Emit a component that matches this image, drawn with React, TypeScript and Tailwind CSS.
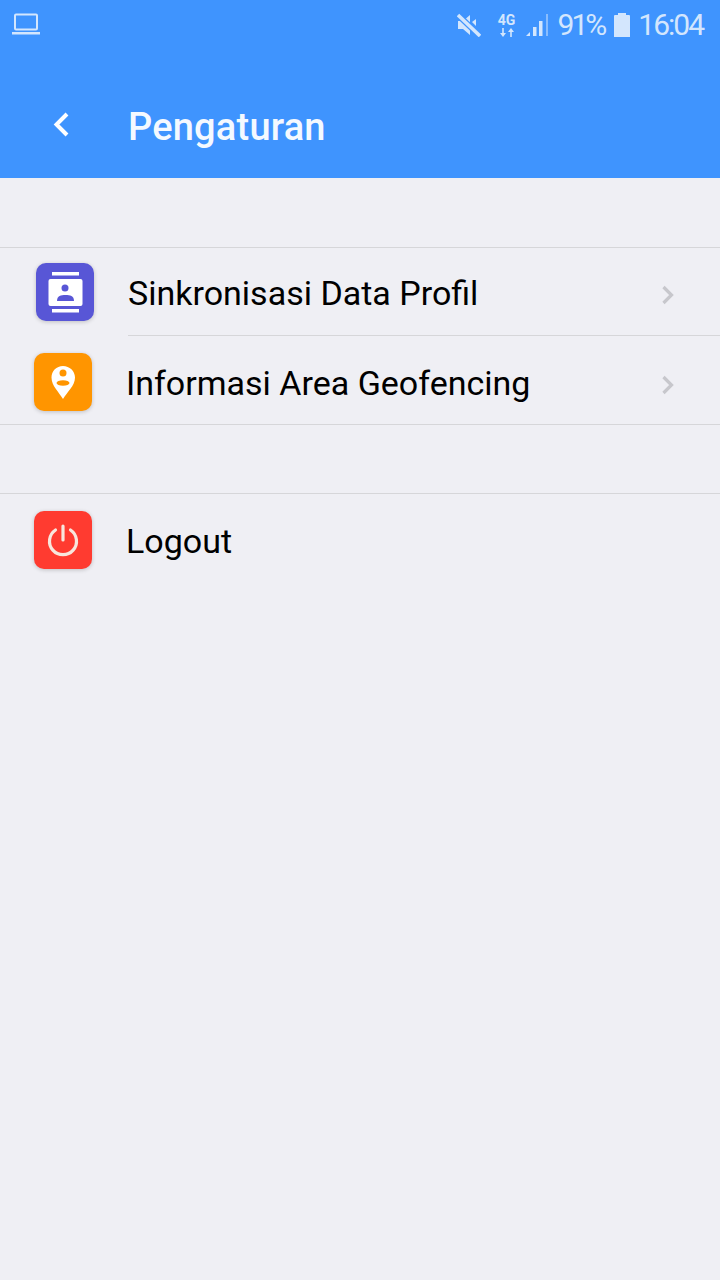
function ChevronRight({ className }: { className: string }) {
  return (
    <svg width="14" height="22" viewBox="0 0 14 22" className={className}>
      <path d="M2.5 3 L10.5 11 L2.5 19" fill="none" stroke="#c7c7cc" strokeWidth="3.2" />
    </svg>
  );
}

function ContactIcon() {
  return (
    <div className="w-[58px] h-[58px] rounded-[10px] bg-[#5856d6] flex items-center justify-center shadow-[0_1px_4px_rgba(0,0,0,0.2)]">
      <svg width="58" height="58" viewBox="0 0 58 58">
        <rect x="16" y="9" width="27" height="3.5" fill="#fff" />
        <rect x="16" y="46" width="27" height="3.5" fill="#fff" />
        <rect x="12.5" y="16" width="34" height="27" rx="2" fill="#fff" />
        <circle cx="29" cy="25" r="3.5" fill="#5856d6" />
        <path d="M21 38 C21 32.5 25 32 29.5 32 C34 32 38 32.5 38 38 Z" fill="#5856d6" />
      </svg>
    </div>
  );
}

function PinIcon() {
  return (
    <div className="w-[58px] h-[58px] rounded-[10px] bg-[#ff9500] flex items-center justify-center shadow-[0_1px_4px_rgba(0,0,0,0.2)]">
      <svg width="58" height="58" viewBox="0 0 58 58">
        <path d="M29 46 C25 39 17.5 33 17.5 24.5 C17.5 18 22.5 13 29 13 C35.5 13 41 18 41 24.5 C41 33 33 39 29 46 Z" fill="#fff" />
        <circle cx="29" cy="20" r="3.5" fill="#ff9500" />
        <ellipse cx="29" cy="30" rx="6.5" ry="2.8" fill="#ff9500" />
      </svg>
    </div>
  );
}

function PowerIcon() {
  return (
    <div className="w-[58px] h-[58px] rounded-[10px] bg-[#ff3b30] flex items-center justify-center shadow-[0_1px_4px_rgba(0,0,0,0.2)]">
      <svg width="58" height="58" viewBox="0 0 58 58">
        <path d="M21.5 19 A13.5 13.5 0 1 0 36.5 19" fill="none" stroke="#f8e6dc" strokeWidth="3.2" strokeLinecap="round" />
        <path d="M29 15 V29" fill="none" stroke="#f8e6dc" strokeWidth="3.2" strokeLinecap="round" />
      </svg>
    </div>
  );
}

export default function App() {
  return (
    <div className="w-[720px] h-[1280px] bg-[#efeff4] flex flex-col font-['Roboto',sans-serif] overflow-hidden">
      {/* Header */}
      <div className="h-[178px] bg-[#3f94fe] flex flex-col shrink-0">
        <div className="h-[50px] pl-3 pr-[17px] flex items-center justify-between text-[#d3e6fd]">
          <svg width="28" height="24" viewBox="0 0 28 24" className="mb-[3px]">
            <rect x="3" y="2.5" width="22" height="15" rx="1" fill="none" stroke="#d3e6fd" strokeWidth="2" />
            <rect x="0" y="20" width="28" height="2.5" fill="#d3e6fd" />
          </svg>
          <div className="flex items-center">
            <svg width="24" height="24" viewBox="0 0 24 24" className="mr-[16px]">
              <path d="M1 8 H6 L13 2 V22 L6 16 H1 Z" fill="#d3e6fd" />
              <path d="M15 9 L19 13 V6 Z" fill="#d3e6fd" />
              <path d="M1 2 L23 23" stroke="#3f94fe" strokeWidth="6" />
              <path d="M1 2 L23 23" stroke="#d3e6fd" strokeWidth="3.5" />
            </svg>
            <div className="w-[20px] mr-[8px] flex flex-col items-center text-[14px] leading-[13px] font-bold">
              <span>4G</span>
              <svg width="16" height="9" viewBox="0 0 16 9" className="mt-px">
                <path d="M3.2 0 V5 H1 L4 9 L7 5 H4.8 V0 Z" fill="#d3e6fd" />
                <path d="M11.2 9 V4 H9 L12 0 L15 4 H12.8 V9 Z" fill="#d3e6fd" />
              </svg>
            </div>
            <svg width="24" height="26" viewBox="0 0 24 26" className="mr-[9px]">
              <path d="M1 24 H5 V20 Z" fill="#d3e6fd" />
              <rect x="8" y="15" width="3.5" height="9" fill="#d3e6fd" />
              <rect x="14" y="9" width="3.5" height="15" fill="#d3e6fd" />
              <rect x="21" y="2" width="2" height="22" fill="#d3e6fd" fillOpacity="0.5" />
            </svg>
            <span className="text-[30px] leading-none tracking-[-3px] mr-[9px]">91%</span>
            <svg width="18" height="26" viewBox="0 0 18 26" className="mr-[7px]">
              <path d="M5 1 H13 V3 H16 Q17 3 17 4 V25 H1 V4 Q1 3 2 3 H5 Z" fill="#d3e6fd" />
            </svg>
            <span className="text-[30px] leading-none tracking-[-2px]">16:04</span>
          </div>
        </div>
        <div className="flex-1 flex items-center pt-[25px]">
          <div className="w-[128px] flex pl-[52px] mb-[4px]">
            <svg width="20" height="28" viewBox="0 0 20 28">
              <path d="M15 3 L4.5 13.5 L15 24" fill="none" stroke="#fff" strokeWidth="4" />
            </svg>
          </div>
          <span className="text-[38px] leading-none tracking-[0.2px] font-medium text-[#f4f9ff]">Pengaturan</span>
        </div>
      </div>

      {/* Sync and geofencing */}
      <div className="mt-[69px] border-y border-[#d6d6d9]">
        <div className="flex items-center h-[87px] pt-px pl-[36px] pr-[45px]">
          <ContactIcon />
          <span className="ml-[34px] mt-[2px] flex-1 text-[34px] leading-none text-black">Sinkronisasi Data Profil</span>
          <ChevronRight className="shrink-0 mt-[5px]" />
        </div>
        <div className="ml-[128px] h-px bg-[#d6d6d9]" />
        <div className="flex items-center h-[88px] pt-[4px] pl-[34px] pr-[45px]">
          <PinIcon />
          <span className="ml-[34px] mt-[2px] flex-1 text-[34px] leading-none text-black">Informasi Area Geofencing</span>
          <ChevronRight className="shrink-0 mt-[6px]" />
        </div>
      </div>

      {/* Logout */}
      <div className="mt-[68px] border-t border-[#d6d6d9]">
        <div className="flex items-center h-[92px] pl-[34px] pr-[45px]">
          <PowerIcon />
          <span className="ml-[34px] mt-[2px] flex-1 text-[34px] leading-none text-black">Logout</span>
        </div>
      </div>
    </div>
  );
}
